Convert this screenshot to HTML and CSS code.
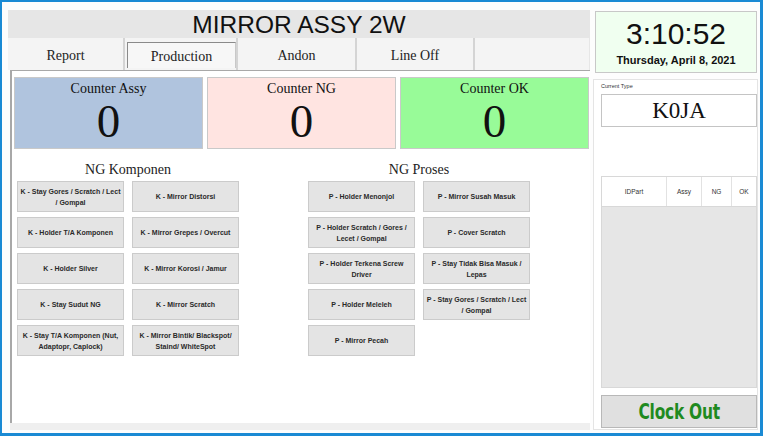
FILE: index.html
```html
<!DOCTYPE html>
<html>
<head>
<meta charset="utf-8">
<link rel="stylesheet" href="styles.css">
</head>
<body>
<div class="window">
  <div class="left">
    <div class="title">MIRROR ASSY 2W</div>
    <div class="tabs">
      <div class="tab t1">Report</div>
      <div class="tab t2 active"><span>Production</span></div>
      <div class="tab t3">Andon</div>
      <div class="tab t4">Line Off</div>
      <div class="tab-rest"></div>
    </div>
    <div class="panel">
      <div class="counters">
        <div class="counter assy"><div class="c-label">Counter Assy</div><div class="c-value">0</div></div>
        <div class="counter ng"><div class="c-label">Counter NG</div><div class="c-value">0</div></div>
        <div class="counter ok"><div class="c-label">Counter OK</div><div class="c-value">0</div></div>
      </div>
      <div class="groups">
        <div class="group komponen">
          <div class="group-title">NG Komponen</div>
          <div class="grid">
            <div class="btn">K - Stay Gores / Scratch / Lect / Gompal</div>
            <div class="btn">K - Mirror Distorsi</div>
            <div class="btn">K - Holder T/A Komponen</div>
            <div class="btn">K - Mirror Grepes / Overcut</div>
            <div class="btn">K - Holder Silver</div>
            <div class="btn">K - Mirror Korosi / Jamur</div>
            <div class="btn">K - Stay Sudut NG</div>
            <div class="btn">K - Mirror Scratch</div>
            <div class="btn">K - Stay T/A Komponen (Nut, Adaptopr, Caplock)</div>
            <div class="btn">K - Mirror Bintik/ Blackspot/ Staind/ WhiteSpot</div>
          </div>
        </div>
        <div class="group proses">
          <div class="group-title">NG Proses</div>
          <div class="grid">
            <div class="btn">P - Holder Menonjol</div>
            <div class="btn">P - Mirror Susah Masuk</div>
            <div class="btn">P - Holder Scratch / Gores / Lecet / Gompal</div>
            <div class="btn">P - Cover Scratch</div>
            <div class="btn">P - Holder Terkena Screw Driver</div>
            <div class="btn">P - Stay Tidak Bisa Masuk / Lepas</div>
            <div class="btn">P - Holder Meleleh</div>
            <div class="btn">P - Stay Gores / Scratch / Lect / Gompal</div>
            <div class="btn">P - Mirror Pecah</div>
          </div>
        </div>
      </div>
    </div>
    <div class="panel-foot"></div>
  </div>
  <div class="right">
    <div class="clock">
      <div class="time">3:10:52</div>
      <div class="date">Thursday, April 8, 2021</div>
    </div>
    <div class="info">
      <div class="ct-label">Current Type</div>
      <div class="type-box">K0JA</div>
      <div class="table">
        <div class="thead">
          <div class="th c1">IDPart</div>
          <div class="th c2">Assy</div>
          <div class="th c3">NG</div>
          <div class="th c4">OK</div>
        </div>
        <div class="tbody"></div>
      </div>
      <div class="clockout"><span>Clock Out</span></div>
    </div>
  </div>
</div>
</body>
</html>
```
FILE: styles.css
```css
* { box-sizing: border-box; }
html, body { margin: 0; padding: 0; }
body { width: 763px; height: 436px; background: #ffffff; overflow: hidden; }

.window {
  width: 763px;
  height: 436px;
  border-style: solid;
  border-color: #1a8ad4;
  border-width: 2px 3px 3px 2px;
  padding-right: 2px;
  display: flex;
  background: #fdfdfd;
}

.left {
  width: 582px;
  margin-left: 6px;
  margin-top: 8px;
  display: flex;
  flex-direction: column;
}

.title {
  height: 28px;
  background: #e6e6e6;
  font-family: "Liberation Sans", Arial, sans-serif;
  font-size: 24.5px;
  line-height: 30px;
  text-align: center;
  color: #111;
}

.tabs {
  height: 32px;
  display: flex;
  background: #f4f4f4;
  font-family: "Liberation Serif", "Times New Roman", serif;
  font-size: 14px;
  color: #222;
}
.tab {
  display: flex;
  align-items: center;
  justify-content: center;
  border-right: 2px solid #d4d4d4;
  padding-top: 3px;
}
.t1 { width: 117px; }
.t2 { width: 113px; padding: 4px 0 2px 2px; }
.t3 { width: 119px; }
.t4 { width: 118px; }
.tab-rest { flex: 1; border-right: 1px solid #e6e6e6; }
.tab.active span {
  display: flex;
  width: 100%;
  height: 100%;
  align-items: center;
  justify-content: center;
  border-top: 1px solid #8a8a8a;
  border-left: 1px solid #8a8a8a;
  border-right: 1px solid #c8c8c8;
  background: #f7f7f7;
  padding-top: 2px;
}

.panel {
  margin-left: 2px;
  height: 353px;
  border-top: 1px solid #a8a8a8;
  border-left: 2px solid #a8a8a8;
  background: #ffffff;
  padding: 6px 1px 0 2px;
}
.panel-foot {
  margin-left: 2px;
  height: 7px;
  background: #efefef;
}

.counters {
  display: flex;
  gap: 4px;
  height: 72px;
}
.counter {
  flex: 1;
  border: 1px solid #c9c9c9;
  font-family: "Liberation Serif", "Times New Roman", serif;
  text-align: center;
  color: #111;
}
.assy { background: #b0c4de; }
.ng { background: #ffe4e1; }
.ok { background: #98fb98; }
.c-label { font-size: 14px; line-height: 16px; margin-top: 3px; }
.c-value { font-size: 47px; line-height: 46px; margin-top: 1px; }

.groups {
  display: flex;
  gap: 69px;
  padding-left: 3px;
  margin-top: 13px;
}
.group-title {
  font-family: "Liberation Serif", "Times New Roman", serif;
  font-size: 14px;
  line-height: 16px;
  text-align: center;
  color: #222;
  margin-bottom: 3px;
}
.grid {
  display: grid;
  grid-template-columns: 107px 107px;
  grid-auto-rows: 31px;
  column-gap: 8px;
  row-gap: 5px;
}
.btn {
  background: #e4e4e4;
  border: 1px solid #cbcbcb;
  display: flex;
  align-items: center;
  justify-content: center;
  text-align: center;
  font-family: "Liberation Sans", Arial, sans-serif;
  font-weight: bold;
  font-size: 7px;
  line-height: 11px;
  color: #2a2a2a;
  padding: 0 1px;
}

.right {
  width: 165px;
  margin-left: 3px;
  margin-top: 8px;
  display: flex;
  flex-direction: column;
}
.clock {
  margin: 1px 1px 0 2px;
  height: 62px;
  background: #f0fff0;
  border: 1px solid #c8c8c8;
  text-align: center;
  font-family: "Liberation Sans", Arial, sans-serif;
  color: #111;
}
.time { font-size: 30px; line-height: 32px; margin-top: 6px; }
.date { font-size: 11px; font-weight: bold; line-height: 14px; margin-top: 3px; }

.info {
  margin-top: 6px;
  height: 351px;
  border: 1px solid #e4e4e4;
  background: #ffffff;
  padding: 0 0 0 7px;
  display: flex;
  flex-direction: column;
}
.ct-label {
  font-family: "Liberation Sans", Arial, sans-serif;
  font-size: 5.5px;
  line-height: 7px;
  margin-top: 3px;
  color: #333;
}
.type-box {
  margin-top: 4px;
  height: 33px;
  border: 1px solid #c4c4c4;
  font-family: "Liberation Serif", "Times New Roman", serif;
  font-size: 23px;
  line-height: 31px;
  text-align: center;
  color: #111;
}
.table {
  margin-top: 49px;
  border: 1px solid #d8d8d8;
  height: 212px;
  display: flex;
  flex-direction: column;
}
.thead {
  height: 30px;
  display: flex;
  background: #fff;
  border-bottom: 1px solid #d8d8d8;
}
.th {
  display: flex;
  align-items: center;
  justify-content: center;
  font-family: "Liberation Sans", Arial, sans-serif;
  font-size: 6.5px;
  color: #333;
  border-right: 1px solid #e2e2e2;
}
.c1 { width: 65px; }
.c2 { width: 35px; }
.c3 { width: 30px; }
.c4 { flex: 1; border-right: none; }
.tbody { flex: 1; background: #e6e6e6; }

.clockout {
  margin-top: 7px;
  height: 33px;
  background: #e0e0e0;
  border: 1px solid #b8b8b8;
  display: flex;
  align-items: center;
  justify-content: center;
}
.clockout span {
  display: inline-block;
  font-family: "DejaVu Sans Condensed", "DejaVu Sans", sans-serif;
  font-weight: bold;
  font-size: 22px;
  color: #1f8a1f;
  transform: scaleX(0.78);
  letter-spacing: -0.3px;
}
```
